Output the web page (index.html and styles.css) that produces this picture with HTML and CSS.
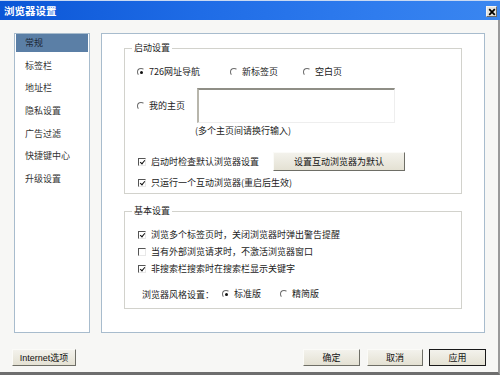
FILE: index.html
```html
<!DOCTYPE html>
<html lang="zh">
<head>
<meta charset="utf-8">
<link rel="stylesheet" href="styles.css">
</head>
<body>
<div class="window">
  <div class="titlebar">
    <span class="title">浏览器设置</span>
    <span class="close"><svg viewBox="0 0 10 10" width="8" height="8"><path d="M1.5 1.5 L8.5 8.5 M8.5 1.5 L1.5 8.5" stroke="#000" stroke-width="2.2"/></svg></span>
  </div>
  <div class="body">
    <div class="main">
      <ul class="nav">
        <li class="active">常规</li>
        <li>标签栏</li>
        <li>地址栏</li>
        <li>隐私设置</li>
        <li>广告过滤</li>
        <li>快捷键中心</li>
        <li>升级设置</li>
      </ul>
      <div class="panel">
        <fieldset class="group g1">
          <legend>启动设置</legend>
          <div class="row r1">
            <label class="opt w93"><span class="radio on"></span>726网址导航</label>
            <label class="opt w73"><span class="radio"></span>新标签页</label>
            <label class="opt"><span class="radio"></span>空白页</label>
          </div>
          <div class="row r2">
            <label class="opt w60"><span class="radio"></span>我的主页</label>
            <div class="textarea"></div>
          </div>
          <div class="hint">(多个主页间请换行输入)</div>
          <div class="row r3">
            <label class="opt cb w135"><span class="check on"></span>启动时检查默认浏览器设置</label>
            <span class="btn wide">设置互动浏览器为默认</span>
          </div>
          <div class="row r4">
            <label class="opt cb"><span class="check on"></span>只运行一个互动浏览器(重启后生效)</label>
          </div>
        </fieldset>
        <fieldset class="group g2">
          <legend>基本设置</legend>
          <div class="row crow first">
            <label class="opt cb"><span class="check on"></span>浏览多个标签页时，关闭浏览器时弹出警告提醒</label>
          </div>
          <div class="row crow">
            <label class="opt cb"><span class="check"></span>当有外部浏览请求时，不激活浏览器窗口</label>
          </div>
          <div class="row crow">
            <label class="opt cb"><span class="check on"></span>非搜索栏搜索时在搜索栏显示关键字</label>
          </div>
          <div class="row style">
            <span class="slabel">浏览器风格设置：</span>
            <label class="opt w58"><span class="radio on"></span>标准版</label>
            <label class="opt"><span class="radio"></span>精简版</label>
          </div>
        </fieldset>
      </div>
    </div>
    <div class="footer">
      <span class="btn inet">Internet选项</span>
      <span class="spacer"></span>
      <span class="btn ok">确定</span>
      <span class="btn cancel">取消</span>
      <span class="btn apply">应用</span>
    </div>
  </div>
</div>
</body>
</html>
```
FILE: styles.css
```css
* { box-sizing: border-box; }
html, body { margin: 0; padding: 0; }
body {
  width: 500px;
  height: 375px;
  overflow: hidden;
  font-family: "Noto Sans CJK SC", "Noto Sans", sans-serif;
  font-size: 9px;
  color: #222;
  background: #f7f7f5;
}
.window {
  width: 500px;
  height: 375px;
  display: flex;
  flex-direction: column;
}
.titlebar {
  height: 20px;
  flex: none;
  display: flex;
  align-items: center;
  padding: 0 4px;
  background: linear-gradient(90deg, #0b56d6 0%, #1f6ce6 40%, #2f7cee 75%, #3a86f0 100%);
  border-top: 1px solid #c9d9f2;
  color: #fff;
}
.title {
  font-size: 10.5px;
  font-weight: bold;
  line-height: 12px;
  flex: 1;
}
.close {
  width: 11px;
  height: 11px;
  background: #e4e2dc;
  border: 1px solid #f4f4f4;
  border-right-color: #6a6a6a;
  border-bottom-color: #6a6a6a;
  display: flex;
  align-items: center;
  justify-content: center;
  margin-right: -1px;
  margin-top: 2px;
}
.body {
  flex: 1;
  display: flex;
  flex-direction: column;
  border-bottom: 3px solid #6e6e6e;
  border-right: 2px solid #9a9a9a;
}
.main {
  display: flex;
  gap: 11px;
  padding: 13px 13px 0 14px;
  height: 313px;
}
.nav {
  list-style: none;
  margin: 0;
  padding: 0 1px;
  width: 76px;
  height: 300px;
  background: #fff;
  border: 1px solid #a8bccd;
  color: #333;
}
.nav li {
  height: 18px;
  line-height: 18px;
  margin-bottom: 4.67px;
  padding-left: 9px;
}
.nav li.active {
  background: #5b7fa6;
  color: #1d2a38;
}
.panel {
  width: 384px;
  height: 300px;
  background: #fff;
  border: 1px solid #a8bccd;
  padding: 7px 0 0 22px;
}
.group {
  margin: 0;
  width: 338px;
  border: 1px solid #d2d2cc;
  padding: 0 0 0 12px;
  min-width: 0;
}
.group legend {
  line-height: 14px;
  height: 14px;
  padding: 0 2px;
  margin-left: -5px;
  color: #222;
}
.g1 { padding-bottom: 2px; }
.g2 { margin-top: 10px; padding-bottom: 6px; }
.row {
  display: flex;
  align-items: center;
}
.opt {
  display: flex;
  align-items: center;
  gap: 4px;
  white-space: nowrap;
  line-height: 16px;
}
.opt.cb { gap: 5px; margin-left: 1px; }
.w93 { width: 93px; }
.w73 { width: 73px; }
.w60 { width: 60px; }
.w58 { width: 58px; }
.w135 { width: 135px; }
.r1 { margin-top: 9px; height: 16px; }
.r2 { margin-top: 8px; height: 35px; }
.hint {
  height: 16px;
  line-height: 16px;
  padding-left: 58px;
}
.r3 { margin-top: 13px; height: 19px; }
.r4 { margin-top: 4px; height: 16px; }
.crow { height: 17px; }
.crow.first { margin-top: 8px; }
.style { margin-top: 9px; height: 16px; }
.slabel { width: 85px; padding-left: 5px; white-space: nowrap; }
.radio {
  width: 8px;
  height: 8px;
  border-radius: 50%;
  flex: none;
  background: #fff;
  border: 1px solid #fff;
  border-top-color: #6c6c6c;
  border-left-color: #6c6c6c;
  position: relative;
}
.radio.on::after {
  content: "";
  position: absolute;
  left: 1.5px;
  top: 1.5px;
  width: 3px;
  height: 3px;
  border-radius: 50%;
  background: #111;
}
.check {
  width: 8px;
  height: 8px;
  flex: none;
  background: #fff;
  border: 1px solid #e8e8e8;
  border-top-color: #555;
  border-left-color: #555;
  position: relative;
}
.check.on::after {
  content: "";
  position: absolute;
  left: 1.5px;
  top: 0px;
  width: 2px;
  height: 4px;
  border: solid #111;
  border-width: 0 1.5px 1.5px 0;
  transform: rotate(40deg);
}
.textarea {
  width: 198px;
  height: 35px;
  background: #fff;
  border: 1px solid #eee;
  border-top: 2px solid #8f8e86;
  border-left: 2px solid #b8b6ac;
}
.btn {
  display: flex;
  align-items: center;
  justify-content: center;
  height: 17px;
  background: linear-gradient(#f3f2ec, #e4e1d3);
  border: 1px solid #fbfbf8;
  border-right-color: #6e6e66;
  border-bottom-color: #6e6e66;
  color: #111;
  white-space: nowrap;
  line-height: 14px;
}
.btn.wide { width: 132px; height: 19px; }
.footer {
  display: flex;
  align-items: center;
  margin-top: 16px;
  padding: 0 12px 0 12px;
}
.spacer { flex: 1; }
.inet { width: 64px; font-family: "Liberation Sans", "Noto Sans CJK SC", sans-serif; }
.ok { width: 57px; }
.cancel { width: 56px; margin-left: 7px; }
.apply { width: 57px; margin-left: 6px; border: 1px solid #1a1a1a; }
```
